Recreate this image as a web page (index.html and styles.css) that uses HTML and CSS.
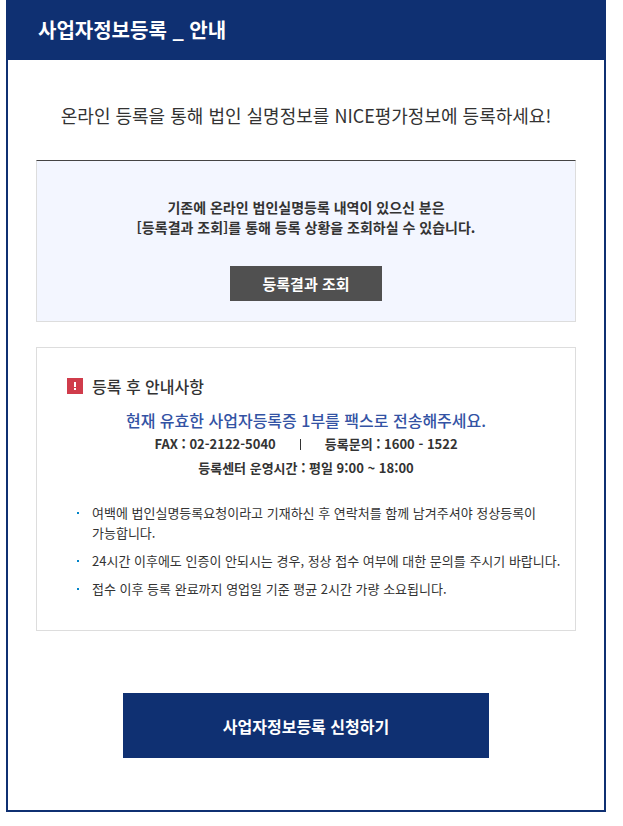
FILE: index.html
```
<!DOCTYPE html>
<html lang="ko">
<head>
    <meta charset="UTF-8">
    <meta name="viewport" content="width=device-width, initial-scale=1.0">
    <title>사업자정보등록 _ 안내</title>
    <link rel="stylesheet" href="styles.css">
</head>
<body>
    <div class="popup">
        <h1 class="title">사업자정보등록 _ 안내</h1>
        <div class="content">
            <p class="lead">온라인 등록을 통해 법인 실명정보를 NICE평가정보에 등록하세요!</p>
            <div class="result">
                <p>기존에 온라인 법인실명등록 내역이 있으신 분은<br>[등록결과 조회]를 통해 등록 상황을 조회하실 수 있습니다.</p>
                <button type="button" class="btn-result">등록결과 조회</button>
            </div>
            <div class="guide">
                <h2>
                    <svg class="icon" width="16" height="16" viewBox="0 0 16 16" aria-hidden="true">
                        <rect width="16" height="16" fill="#d03c4b"/>
                        <path d="M7 4h2v5H7zM7 10h2v2H7z" fill="#fff"/>
                    </svg>
                    등록 후 안내사항
                </h2>
                <div class="contact">
                    <p class="fax">현재 유효한 사업자등록증 1부를 팩스로 전송해주세요.</p>
                    <p class="tel"><span>FAX : 02-2122-5040</span><span class="bar"></span><span>등록문의 : 1600 - 1522</span></p>
                    <p>등록센터 운영시간 : 평일 9:00 ~ 18:00</p>
                </div>
                <ul>
                    <li>여백에 법인실명등록요청이라고 기재하신 후 연락처를 함께 남겨주셔야 정상등록이 가능합니다.</li>
                    <li>24시간 이후에도 인증이 안되시는 경우, 정상 접수 여부에 대한 문의를 주시기 바랍니다.</li>
                    <li>접수 이후 등록 완료까지 영업일 기준 평균 2시간 가량 소요됩니다.</li>
                </ul>
            </div>
            <button type="button" class="btn-apply">사업자정보등록 신청하기</button>
        </div>
    </div>
</body>
</html>
```
FILE: styles.css
```
* {
    box-sizing: border-box;
}
body {
    margin: 0;
    background-color: #fff;
    color: #333;
    font-family: "Noto Sans CJK KR", sans-serif;
    font-size: 14px;
    line-height: 20px;
    word-break: keep-all;
}
h1,h2,p,ul {
    margin: 0;
    padding: 0;
}
button {
    display: block;
    margin: 0 auto;
    padding: 0;
    border: 0;
    color: #fff;
    font-family: inherit;
    cursor: pointer;
}
.popup {
    margin: 0 17px 14px 6px;
    border: 2px solid #0f3072;
    border-top: 0;
}
.title {
    padding: 0 30px;
    background-color: #0f3072;
    color: #fff;
    font-size: 20px;
    font-weight: 700;
    line-height: 60px;
}
.content {
    padding: 40px 28px 52px;
}
.lead {
    font-size: 18px;
    line-height: 30px;
    text-align: center;
}
/* 등록결과 조회 */
.result {
    margin-top: 30px;
    padding: 36px 20px 20px;
    border: 1px solid #ddd;
    border-top-color: #444;
    background-color: #f3f6ff;
    font-weight: 700;
    text-align: center;
}
.btn-result {
    width: 152px;
    height: 35px;
    margin-top: 29px;
    background-color: #505050;
    font-size: 15px;
    font-weight: 700;
}
/* 안내사항 */
.guide {
    margin-top: 25px;
    padding: 26px 10px 31px 30px;
    border: 1px solid #ddd;
}
.guide h2 {
    display: flex;
    align-items: center;
    gap: 9px;
    font-size: 16px;
    font-weight: 500;
    line-height: 24px;
}
.contact {
    margin-top: 10px;
    padding-right: 20px;
    font-size: 13px;
    font-weight: 700;
    line-height: 24px;
    text-align: center;
}
.contact .fax {
    color: #3353a4;
    font-size: 16px;
    font-weight: 500;
}
.contact .tel {
    display: flex;
    justify-content: center;
    align-items: center;
    gap: 24px;
}
.bar {
    width: 1px;
    height: 11px;
    background-color: #333;
}
.guide ul {
    display: grid;
    gap: 8px;
    margin-top: 23px;
    font-size: 13px;
    list-style: none;
}
.guide li {
    display: flex;
    gap: 13px;
    padding-left: 10px;
}
.guide li::before {
    content: "";
    flex: none;
    width: 2px;
    height: 2px;
    margin-top: 9px;
    background-color: #0084c8;
}
.btn-apply {
    width: 100%;
    max-width: 366px;
    height: 65px;
    margin-top: 62px;
    background-color: #0f3072;
    font-size: 16px;
    font-weight: 700;
}
```
